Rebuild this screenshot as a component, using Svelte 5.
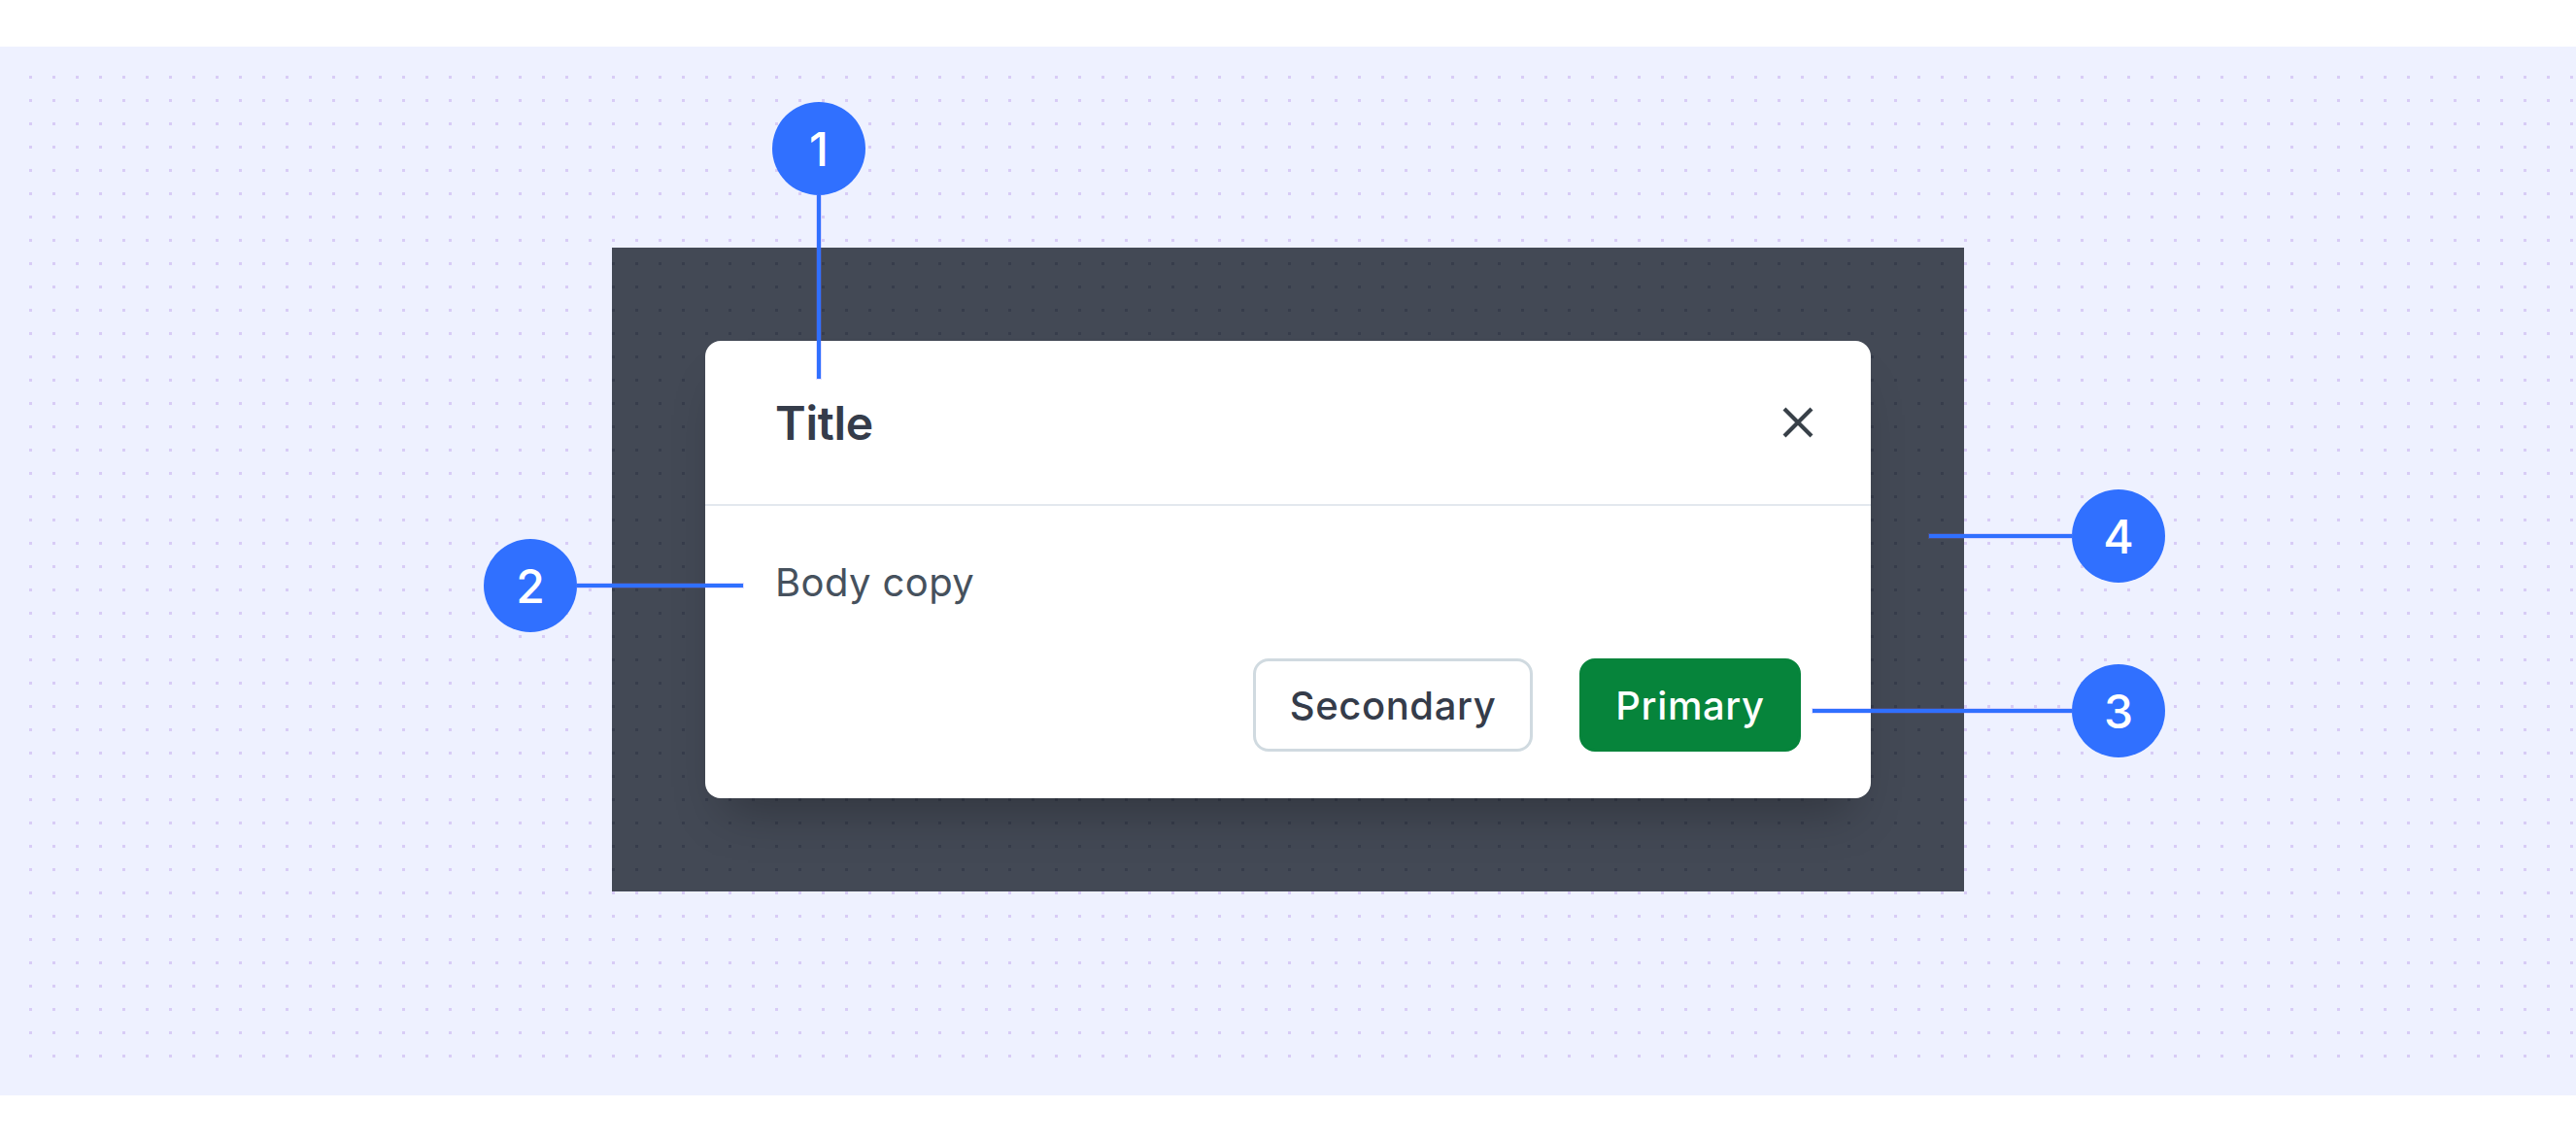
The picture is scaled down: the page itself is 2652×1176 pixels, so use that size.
<script lang="ts">
  const markers = [1, 2, 3, 4];
</script>

<div class="page">
  <section class="canvas">
    <div class="dots"></div>

    <div class="overlay">
      <div class="dots dots-dim"></div>
      <div class="modal">
        <header class="modal-header">
          <h2>Title</h2>
          <button class="close" type="button" aria-label="Close">
            <svg viewBox="0 0 32 32" width="32" height="32" aria-hidden="true">
              <path d="M2 2 30 30M30 2 2 30" fill="none" stroke="currentColor" stroke-width="4.2" />
            </svg>
          </button>
        </header>
        <div class="modal-body">
          <p>Body copy</p>
          <div class="actions">
            <button class="btn secondary" type="button">Secondary</button>
            <button class="btn primary" type="button">Primary</button>
          </div>
        </div>
      </div>
    </div>

    {#each markers as n}
      <span class="line line-{n}"></span>
      <span class="marker marker-{n}">{n}</span>
    {/each}
  </section>
</div>

<style>
  :global(body) {
    background: #fff;
    font-family: Inter, "Liberation Sans", sans-serif;
  }
  .page {
    padding: 48px 0;
  }
  .canvas {
    position: relative;
    height: 1080px;
    background: #eef1ff;
    display: flex;
    justify-content: center;
    align-items: flex-start;
    overflow: hidden;
  }
  .dots {
    position: absolute;
    inset: 30px 0 30px 30px;
    background-image: linear-gradient(to right, #d8ccf6 3px, transparent 3px);
    background-size: 24px 24px;
    mask-image: linear-gradient(to bottom, #000 3px, transparent 3px);
    mask-size: 24px 24px;
  }
  .overlay {
    position: relative;
    margin-top: 207px;
    width: 1392px;
    padding: 96px;
    box-sizing: border-box;
    background: rgba(36, 43, 55, 0.85);
  }
  .dots-dim {
    inset: 0;
    background-image: linear-gradient(to right, rgba(20, 24, 34, 0.16) 3px, transparent 3px);
    mask-position: 0 15px;
  }
  .modal {
    position: relative;
    background: #fff;
    border-radius: 16px;
    box-shadow: 0 32px 48px -20px rgba(0, 0, 0, 0.28);
  }
  .modal-header {
    display: flex;
    align-items: center;
    justify-content: space-between;
    height: 168px;
    padding: 0 59px 0 72px;
    border-bottom: 2px solid #e3e8ee;
  }
  h2 {
    margin: 0;
    font-size: 48px;
    font-weight: 600;
    letter-spacing: -0.3px;
    color: #353c4a;
  }
  .close {
    display: flex;
    padding: 0;
    border: 0;
    background: none;
    color: #384048;
  }
  .modal-body {
    padding: 47px 72px 48px;
  }
  p {
    margin: 0 0 46px;
    font-size: 40px;
    line-height: 64px;
    letter-spacing: 0.4px;
    color: #46515d;
  }
  .actions {
    display: flex;
    justify-content: flex-end;
    gap: 48px;
  }
  .btn {
    height: 96px;
    padding: 0;
    border: 3px solid transparent;
    border-radius: 16px;
    font-family: inherit;
    font-size: 40px;
    font-weight: 450;
    letter-spacing: 0.6px;
  }
  .secondary {
    width: 288px;
    background: #fff;
    border-color: #d0dae0;
    color: #353c4a;
  }
  .primary {
    width: 228px;
    background: #06843b;
    border-color: #06843b;
    color: #fff;
  }
  .marker {
    position: absolute;
    width: 96px;
    height: 96px;
    border-radius: 50%;
    background: #3070ff;
    color: #fff;
    display: flex;
    align-items: center;
    justify-content: center;
    font-size: 48px;
    font-weight: 550;
  }
  .line {
    position: absolute;
    background: #3070ff;
    box-shadow: 0 0 0 1px rgba(120, 100, 255, 0.2);
  }
  .marker-1 {
    left: 795px;
    top: 57px;
  }
  .line-1 {
    left: 841px;
    top: 153px;
    width: 4px;
    height: 189px;
  }
  .marker-2 {
    left: 498px;
    top: 507px;
  }
  .line-2 {
    left: 594px;
    top: 553px;
    width: 171px;
    height: 4px;
  }
  .marker-3 {
    left: 2133px;
    top: 636px;
  }
  .line-3 {
    left: 1866px;
    top: 682px;
    width: 267px;
    height: 4px;
  }
  .marker-4 {
    left: 2133px;
    top: 456px;
  }
  .line-4 {
    left: 1986px;
    top: 502px;
    width: 147px;
    height: 4px;
  }
</style>
